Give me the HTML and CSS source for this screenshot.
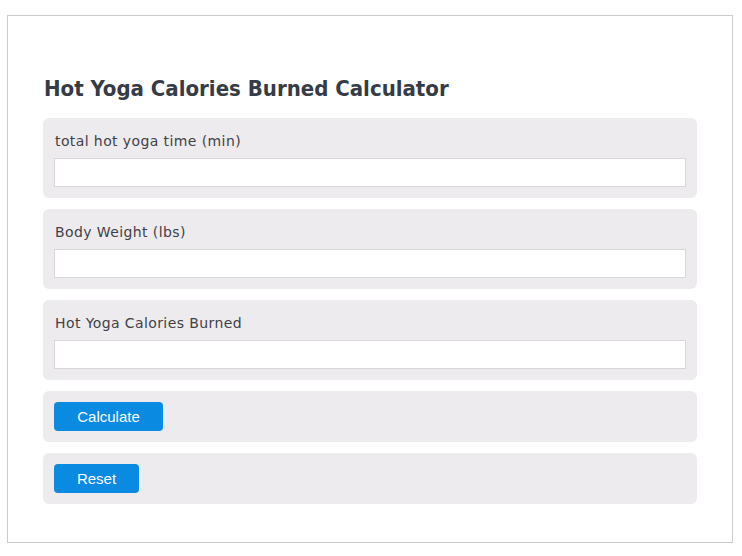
FILE: index.html
```html
<!DOCTYPE html>
<html>
<head>
<meta charset="utf-8">
<link rel="stylesheet" href="styles.css">
</head>
<body>
<div class="page">
  <div class="calc">
    <h2 class="title">Hot Yoga Calories Burned Calculator</h2>
    <div class="row">
      <label class="label">total hot yoga time (min)</label>
      <input class="field" type="text">
    </div>
    <div class="row">
      <label class="label">Body Weight (lbs)</label>
      <input class="field" type="text">
    </div>
    <div class="row">
      <label class="label">Hot Yoga Calories Burned</label>
      <input class="field" type="text">
    </div>
    <div class="row row-btn">
      <button class="btn btn-calc">Calculate</button>
    </div>
    <div class="row row-btn">
      <button class="btn btn-reset">Reset</button>
    </div>
  </div>
</div>
</body>
</html>
```

FILE: styles.css
```css
html, body {
  margin: 0;
  padding: 0;
  background: #ffffff;
}
.page {
  padding: 15px 9px 0 7px;
}
.calc {
  border: 1px solid #cccccc;
  height: 528px;
  padding: 56px 35px 0 35px;
  box-sizing: border-box;
  width: 726px;
}
.title {
  font-family: "DejaVu Sans Condensed", "DejaVu Sans", sans-serif;
  font-stretch: condensed;
  font-size: 22px;
  font-weight: bold;
  color: #353b47;
  margin: 0 0 12px 1px;
  line-height: 34px;
}
.row {
  background: #edebee;
  border-radius: 6px;
  padding: 13px 11px 11px 11px;
  margin-bottom: 11px;
  display: flex;
  flex-direction: column;
  align-items: flex-start;
}
.row-btn {
  padding-top: 11px;
}
.label {
  font-family: "DejaVu Sans", sans-serif;
  font-size: 14px;
  color: #3f4147;
  line-height: 20px;
  margin: 0 0 7px 1px;
  letter-spacing: 0.4px;
}
.field {
  width: 100%;
  height: 29px;
  box-sizing: border-box;
  border: 1px solid #d8d6da;
  background: #ffffff;
  margin: 0;
}
.btn {
  font-family: "Liberation Sans", Arial, sans-serif;
  font-size: 15px;
  color: #ffffff;
  background: #0b8ae2;
  border: none;
  border-radius: 4px;
  height: 29px;
  padding: 0;
  margin: 0;
}
.btn-calc { width: 109px; }
.btn-reset { width: 85px; }
```
